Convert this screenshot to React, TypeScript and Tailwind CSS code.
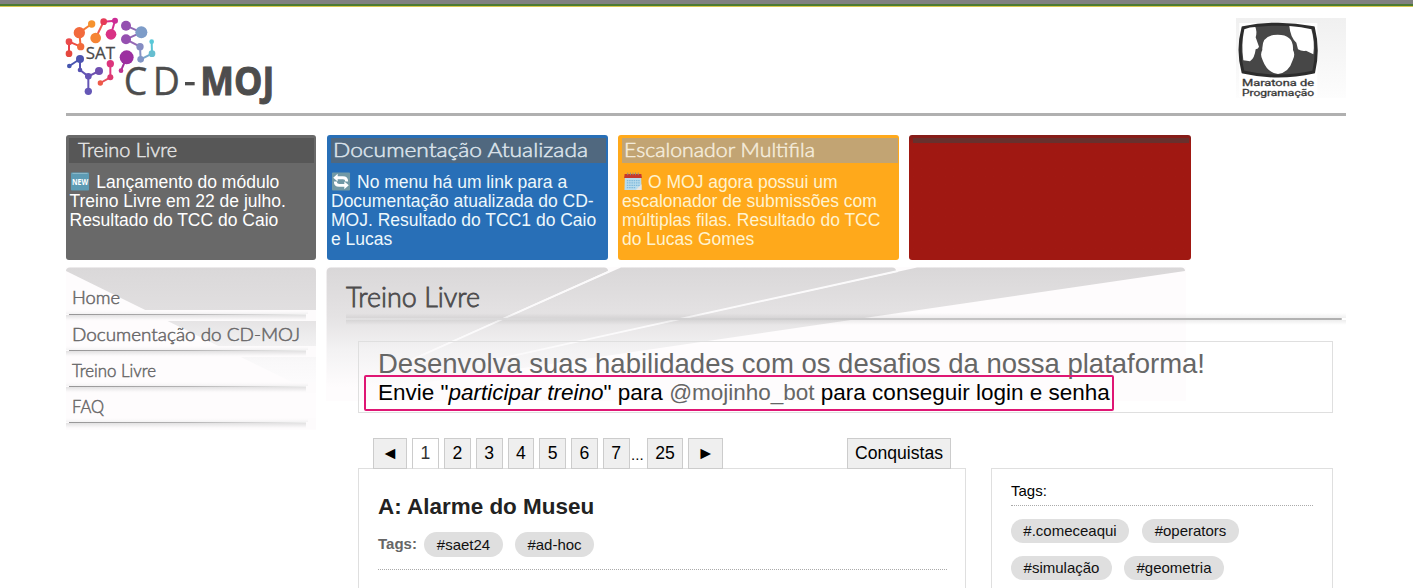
import type { ReactNode } from "react";

type LetteringProps = {
  text: string;
  width: number;
  height: number;
  size: number;
  baseline: number;
  fill: string;
};

/* Display lettering set to an exact measure. */
function Lettering({ text, width, height, size, baseline, fill }: LetteringProps) {
  return (
    <svg width={width} height={height} className="block shrink-0 overflow-visible font-['Lato','Liberation_Sans',sans-serif] font-light">
      <text x="0" y={baseline} fontSize={size} textLength={width} lengthAdjust="spacingAndGlyphs" fill={fill} stroke={fill} strokeWidth={size > 25 ? 0.8 : 0.5}>
        {text}
      </text>
    </svg>
  );
}

function MojLogo() {
  const links: [number, number, number, number, string][] = [
    [88, 98, 125, 72, "#f47b35"],
    [88, 98, 92, 140, "#f2663a"],
    [57, 125, 92, 140, "#ee4d40"],
    [57, 125, 57, 161, "#e8404a"],
    [137, 114, 161, 65, "#ee5a50"],
    [161, 65, 195, 62, "#d9308c"],
    [195, 62, 183, 103, "#d42d90"],
    [228, 77, 274, 97, "#8f68b4"],
    [274, 97, 228, 118, "#8f68b4"],
    [228, 118, 270, 140, "#9468b5"],
    [270, 140, 272, 178, "#8490c4"],
    [272, 178, 306, 161, "#78a8cc"],
    [306, 161, 305, 125, "#58c4d4"],
    [58, 198, 90, 177, "#4a55b0"],
    [90, 177, 90, 210, "#5552b0"],
    [90, 210, 115, 229, "#6254b2"],
    [115, 229, 147, 213, "#6d50b0"],
    [115, 229, 115, 274, "#6455b5"],
    [181, 191, 181, 232, "#e0357c"],
    [181, 232, 151, 249, "#e8505c"],
    [230, 172, 213, 212, "#a02f98"],
  ];
  const nodes: [number, number, number, string][] = [
    [88, 98, 17, "#f26a3d"],
    [125, 72, 11, "#f6922e"],
    [92, 140, 11, "#f26a3a"],
    [57, 125, 10, "#ea4b4b"],
    [57, 161, 10, "#e5483f"],
    [137, 114, 16, "#f58434"],
    [161, 65, 10, "#e63b58"],
    [195, 62, 9, "#cc2c96"],
    [183, 103, 16, "#d93184"],
    [228, 77, 15, "#9450b0"],
    [274, 97, 18, "#7d9cc8"],
    [228, 118, 15, "#9550b0"],
    [270, 140, 11, "#858cc2"],
    [272, 178, 10, "#8195c6"],
    [306, 161, 10, "#66bed0"],
    [305, 125, 7, "#58c8d8"],
    [58, 198, 7, "#4455ae"],
    [90, 177, 12, "#4c54b0"],
    [90, 210, 7, "#5652b0"],
    [115, 229, 10, "#6654b4"],
    [147, 213, 12, "#7050b0"],
    [115, 274, 11, "#6557b6"],
    [181, 191, 11, "#dc347c"],
    [181, 232, 9, "#dd3970"],
    [151, 249, 8, "#ee5a48"],
    [230, 172, 21, "#9c2fa0"],
    [213, 212, 7, "#c03090"],
  ];
  return (
    <svg width="220" height="96" viewBox="48 48 660 288" className="block overflow-visible font-['Open_Sans','Noto_Sans',sans-serif]">
      {links.map(([x1, y1, x2, y2, c], i) => (
        <line key={i} x1={x1} y1={y1} x2={x2} y2={y2} stroke={c} strokeWidth="6" />
      ))}
      {nodes.map(([x, y, r, c], i) => (
        <circle key={i} cx={x} cy={y} r={r} fill={c} />
      ))}
      <text x="107" y="177" fontSize="50" textLength="88" lengthAdjust="spacingAndGlyphs" fill="#4a4a4a" stroke="#4a4a4a" strokeWidth="0.8">SAT</text>
      <text transform="translate(221 284) scale(0.97 1)" fontSize="116" fill="#4d4d4d" stroke="#4d4d4d" strokeWidth="1">C</text>
      <text transform="translate(308 284) scale(0.97 1)" fontSize="116" fill="#4d4d4d" stroke="#4d4d4d" strokeWidth="1">D</text>
      <path d="M405 251H434" stroke="#4d4d4d" strokeWidth="10" />
      <text x="451" y="284" fontSize="116" fontWeight="700" textLength="222" lengthAdjust="spacingAndGlyphs" fill="#4d4d4d" stroke="#4d4d4d" strokeWidth="3">MOJ</text>
    </svg>
  );
}

function MaratonaLogo() {
  return (
    <svg width="110" height="80" viewBox="108 54 330 240" className="block font-['Roboto','Liberation_Sans',sans-serif]">
      <defs>
        <linearGradient id="badge" x1="0" y1="0" x2="0" y2="1">
          <stop offset="0" stopColor="#f0f0f0" />
          <stop offset="1" stopColor="#fdfdfd" />
        </linearGradient>
      </defs>
      <rect x="108" y="54" width="330" height="240" fill="url(#badge)" />
      <rect x="118" y="69" width="234" height="222" fill="#fff" />
      <path d="M129 83Q234 62 340 83Q357 150 341 216Q234 240 129 216Q111 150 129 83Z" fill="#474747" stroke="#2c2c2c" strokeWidth="9" />
      <path d="M133 88Q150 81 166 81Q172 95 167 112L177 140Q175 147 167 148Q164 175 150 184L130 181Q123 134 133 88Z" fill="#fff" />
      <path d="M268 78Q305 80 334 88Q345 125 340 163L318 152Q307 155 294 148L289 128Q271 112 268 78Z" fill="#fff" />
      <path d="M187 150Q184 104 233 104Q282 104 279 150Q287 164 278 181Q267 218 234 222Q202 219 188 181Q179 164 187 150Z" fill="#fff" />
      <text x="126" y="257" fontSize="29" textLength="216" lengthAdjust="spacingAndGlyphs" fill="#3c3c3c" stroke="#3c3c3c" strokeWidth="1">Maratona de</text>
      <text x="126" y="288" fontSize="29" textLength="216" lengthAdjust="spacingAndGlyphs" fill="#3c3c3c" stroke="#3c3c3c" strokeWidth="1">Programação</text>
    </svg>
  );
}

function NewIcon() {
  return (
    <svg viewBox="0 0 20 20" className="mr-[2px] inline-block h-[19px] w-5 align-[-3px] font-['Open_Sans',sans-serif]">
      <rect x="0.5" y="0.5" width="19" height="19" rx="1" fill="#5d9bb4" />
      <path d="M2 1.5H18" stroke="#90bdcc" />
      <text x="1.5" y="13.2" fontSize="8.5" fontWeight="700" textLength="17" lengthAdjust="spacingAndGlyphs" fill="#fff">NEW</text>
    </svg>
  );
}

function RefreshIcon() {
  return (
    <svg viewBox="0 0 20 20" className="mr-[6px] inline-block h-[19px] w-5 align-[-3px]">
      <rect x="0.5" y="0.5" width="19" height="19" rx="1" fill="#7199a6" />
      <path d="M6.5 1.8L1.8 6L6.5 10V7.5H12Q14.5 7.5 14.5 10H17.5Q17.5 4.5 12 4.5H6.5Z" fill="#fff" />
      <path d="M13.5 18.2L18.2 14L13.5 10V12.5H8Q5.5 12.5 5.5 10H2.5Q2.5 15.5 8 15.5H13.5Z" fill="#fff" />
    </svg>
  );
}

function CalendarIcon() {
  return (
    <svg viewBox="0 0 20 20" className="mr-[5px] ml-px inline-block h-[19px] w-5 align-[-3px]">
      <path d="M1.5 3H18.5L19 19H1Z" fill="#b9dcec" />
      <path d="M13 19L19 13V19Z" fill="#e8e4e0" />
      <path d="M1.2 2H18.8L19.4 6.4H0.6Z" fill="#c8372b" />
      <path d="M3.5 9H17M3.5 11.5H17M3.5 14H17M3.5 16.5H13" stroke="#7fb9dc" strokeWidth="1.4" strokeDasharray="1.6 0.8" />
      <path d="M4.5 0.6V3.4M7.3 0.6V3.4M10 0.6V3.4M12.7 0.6V3.4M15.5 0.6V3.4" stroke="#8b8a8a" />
    </svg>
  );
}

function NewsCard({ className, header, children }: { className: string; header: ReactNode; children?: ReactNode }) {
  return (
    <section className={`h-[125px] shrink-0 rounded-[3px] pt-[3px] text-[17.5px] leading-[19px] ${className}`}>
      {header}
      <p className="whitespace-nowrap pt-[9px]">{children}</p>
    </section>
  );
}

const menu = [
  { text: "Home", width: 48, row: "h-[43px] pt-[22px]" },
  { text: "Documentação do CD-MOJ", width: 228, row: "h-[25px] pt-[5px]" },
  { text: "Treino Livre", width: 84, row: "h-[25px] pt-[5px]" },
  { text: "FAQ", width: 32, row: "h-[25px] pt-[5px]" },
];

function Menu() {
  return (
    <nav className="relative w-[250px] shrink-0 self-start">
      <svg width="250" height="163" className="absolute inset-0">
        <defs>
          <linearGradient id="menuFade" gradientUnits="userSpaceOnUse" x1="0" y1="0" x2="0" y2="134">
            <stop offset="0" stopColor="#dad8d9" />
            <stop offset="0.33" stopColor="#e1dfe0" />
            <stop offset="0.5" stopColor="#ecebec" />
            <stop offset="0.7" stopColor="#f9f8f9" />
            <stop offset="0.95" stopColor="#fefdfe" />
          </linearGradient>
        </defs>
        <rect width="250" height="163" fill="#fefcfd" />
        <path d="M0 4Q0 0.5 4 0.5H246Q250 0.5 250 4V127Z" fill="url(#menuFade)" />
      </svg>
      <ul className="relative">
        {menu.map((item) => (
          <li key={item.text}>
            <div className={`pl-[6px] ${item.row}`}>
              <Lettering text={item.text} width={item.width} height={18} size={17.5} baseline={15} fill="#6a696a" />
            </div>
            <div className="h-[11px] bg-[#fdfbfc] pt-[1px]">
              <div className="h-[3px] w-[242px] bg-linear-to-b from-[#fdfbfc] to-[#f3f2f3]" />
              <div className="ml-[3px] h-px w-[237px] bg-linear-to-r from-[#979697] via-[#b5b4b5] to-[#eeeeee]" />
              <div className="h-[5px] w-[240px] bg-linear-to-b from-[#e2e1e2] to-[#fdfbfc]" />
            </div>
          </li>
        ))}
      </ul>
    </nav>
  );
}

function Rays() {
  return (
    <svg width="860" height="134" className="absolute top-0 left-0">
      <defs>
        <linearGradient id="rayFade" gradientUnits="userSpaceOnUse" x1="0" y1="0" x2="0" y2="134">
          <stop offset="0" stopColor="#d9d7d8" />
          <stop offset="0.38" stopColor="#e5e3e4" />
          <stop offset="0.62" stopColor="#f3f2f3" />
          <stop offset="0.9" stopColor="#fefcfd" />
        </linearGradient>
      </defs>
      <rect width="860" height="134" fill="#fefcfd" />
      <path d="M0.6 5Q0.6 0.5 5 0.5H278Q282 0.5 282 4L0.6 130Z" fill="url(#rayFade)" />
      <path d="M295 0.5H566Q570 0.5 570 4L0.6 130Z" fill="url(#rayFade)" />
      <path d="M591 0.5H855Q859 0.5 859 4L0.6 130Z" fill="url(#rayFade)" />
      <path d="M284 4L80 95.5M572 4L150 97" stroke="#fbfafb" strokeWidth="1.8" />
    </svg>
  );
}

const pages = ["2", "3", "4", "5", "6", "7"];
const tab = "flex h-[31px] shrink-0 items-center justify-center border border-[#ccc] bg-[#efefef] text-[17.6px] leading-none text-black";

function Pill({ children, className = "" }: { children: string; className?: string }) {
  return (
    <span className={`inline-flex shrink-0 items-center justify-center rounded-full bg-[#dfdfdf] text-[15px] leading-none text-[#111] ${className}`}>
      {children}
    </span>
  );
}

export default function App() {
  return (
    <div className="h-[588px] w-full overflow-hidden bg-white font-['Liberation_Sans',Arial,sans-serif] text-black">
      <div className="h-1 bg-[#808080]" />
      <div className="h-[2px] bg-[#4c7a34]" />
      <div className="h-px bg-[#d9c850]" />
      <div className="ml-[66px] w-[1280px]">
        <header className="flex h-[109px] items-start justify-between border-b-[3px] border-[#b0b0b0] pt-[9px]">
          <MojLogo />
          <div className="pt-[2px]">
            <MaratonaLogo />
          </div>
        </header>

        <div className="flex gap-[10px] pt-[19px]">
          <NewsCard
            className="mr-px w-[250px] bg-[#696969] pl-[3.5px] text-white"
            header={
              <div className="-ml-[0.5px] h-[25px] w-[245px] bg-[#575757] pl-[9px]">
                <Lettering text="Treino Livre" width={99} height={25} size={20.5} baseline={19} fill="#e4e4e4" />
              </div>
            }
          >
            <NewIcon /> Lançamento do módulo<br />Treino Livre em 22 de julho.<br />Resultado do TCC do Caio
          </NewsCard>
          <NewsCard
            className="w-[281px] bg-[#286fb7] pl-[4px] text-[#eef8fc]"
            header={
              <div className="h-[25px] w-[275px] bg-[#50687f] pl-[2px]">
                <Lettering text="Documentação Atualizada" width={255} height={25} size={20.5} baseline={19} fill="#dce4ec" />
              </div>
            }
          >
            <RefreshIcon />No menu há um link para a<br />Documentação atualizada do CD-<br />MOJ. Resultado do TCC1 do Caio<br />e Lucas
          </NewsCard>
          <NewsCard
            className="w-[281px] bg-[#ffa91b] pl-[4px] text-[#fff3cf]"
            header={
              <div className="h-[25px] w-[276px] bg-[#c2a473] pl-[2px]">
                <Lettering text="Escalonador Multifila" width={191} height={25} size={20.5} baseline={19} fill="#f5ecdc" />
              </div>
            }
          >
            <CalendarIcon />O MOJ agora possui um<br />escalonador de submissões com<br />múltiplas filas. Resultado do TCC<br />do Lucas Gomes
          </NewsCard>
          <NewsCard className="w-[282px] bg-linear-to-b from-[#861c18] from-[2px] to-[#a01812] to-[9px] pl-[4px]" header={<div className="h-[5px] w-[276px] bg-[#68302d]" />} />
        </div>

        <div className="flex pt-[7px]">
          <Menu />
          <main className="relative ml-[10px] w-[1020px]">
            <Rays />
            <div className="relative pl-5">
              <h1 className="h-[46px] pt-[15px]">
                <Lettering text="Treino Livre" width={134} height={28} size={27} baseline={24.5} fill="#4d4c4d" />
              </h1>
              <div className="h-[5px] bg-linear-to-b from-[#00000000] to-[#00000010]" />
              <div className="h-[2px] w-[996px] rounded-r-full bg-linear-to-r from-[#e2e1e2] via-[#cfcecf] via-40% to-[#b0b0b0]" />
              <div className="h-[5px] bg-linear-to-b from-[#00000012] to-[#00000000]" />
            </div>

            <section className="relative mt-[16px] ml-8 h-[72px] w-[975px] border border-[#dfdfdf] pt-[6px] pl-[19px] whitespace-nowrap">
              <p className="text-[27.5px] leading-[31px] text-[#666]">Desenvolva suas habilidades com os desafios da nossa plataforma!</p>
              <p className="text-[22.5px] leading-[27px]">
                Envie "<em>participar treino</em>" para <a className="text-[#666]">@mojinho_bot</a> para conseguir login e senha
              </p>
              <div className="absolute top-[33px] left-[5px] h-9 w-[750px] rounded-[2px] border-2 border-[#df1674]" />
            </section>

            <div className="relative mt-[25px] ml-8 flex gap-[25px]">
              <div className="w-[608px]">
                <div className="-mb-px flex h-[31px] pl-[15px]">
                  <button className={`${tab} mr-[5px] w-[34px]`}>◄</button>
                  <button className="mr-[5px] flex h-[31px] w-[27px] shrink-0 items-center justify-center border border-[#ccc] border-b-[#dfdfdf] bg-white text-[17.6px] leading-none text-[#333]">1</button>
                  {pages.map((p) => (
                    <button key={p} className={`${tab} mr-[5px] w-[26.75px]`}>{p}</button>
                  ))}
                  <span className="-ml-[3.4px] w-4 pt-[7px] text-[15px] leading-[20px]">...</span>
                  <button className={`${tab} mr-[5px] w-9`}>25</button>
                  <button className={`${tab} w-[35px]`}>►</button>
                  <button className={`${tab} mr-[15px] ml-auto w-[104px]`}>Conquistas</button>
                </div>
                <article className="h-[160px] border border-[#dfdfdf] pt-[25px] pr-[18px] pl-[19px]">
                  <h2 className="text-[22.45px] leading-[26px] font-bold text-[#222]">A: Alarme do Museu</h2>
                  <div className="mt-3 flex h-[38px] items-start border-b border-dotted border-[#aaa]">
                    <span className="w-[46px] text-[15px] leading-[23px] font-bold text-[#666]">Tags:</span>
                    <Pill className="mr-3 h-[25px] w-[79px]">#saet24</Pill>
                    <Pill className="h-[25px] w-[79px]">#ad-hoc</Pill>
                  </div>
                </article>
              </div>
              <aside className="mt-[30px] h-[160px] w-[342px] border border-[#dfdfdf] px-[19px] pt-[12px]">
                <h3 className="h-[25px] border-b border-dotted border-[#aaa] text-[15px] leading-[20px]">Tags:</h3>
                <div className="mt-[13px] flex gap-[13px]">
                  <Pill className="h-6 w-[118px] pb-px">#.comeceaqui</Pill>
                  <Pill className="h-6 w-[97px] pb-px">#operators</Pill>
                </div>
                <div className="mt-[13px] flex gap-3">
                  <Pill className="h-6 w-[101px] pb-px">#simulação</Pill>
                  <Pill className="h-6 w-[100px] pb-px">#geometria</Pill>
                </div>
              </aside>
            </div>
          </main>
        </div>
      </div>
    </div>
  );
}
